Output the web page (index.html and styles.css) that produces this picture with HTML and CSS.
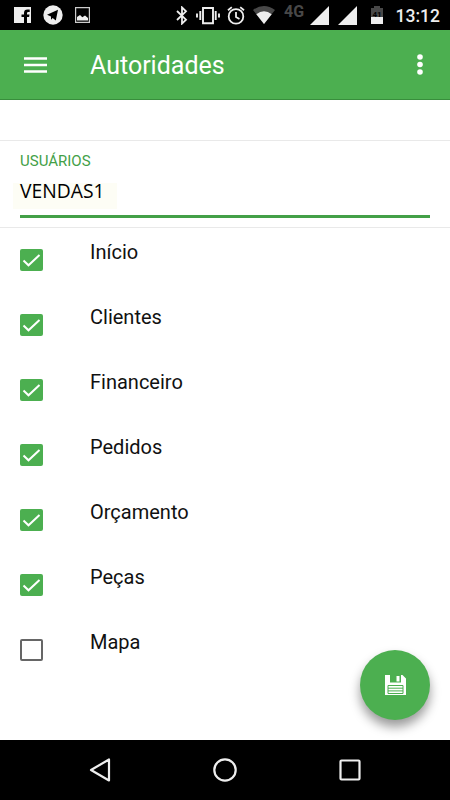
FILE: index.html
```html
<!DOCTYPE html>
<html lang="pt-BR">
<head>
<meta charset="utf-8">
<title>Autoridades</title>
<link rel="stylesheet" href="styles.css">
</head>
<body>
<div class="screen">
  <div class="status">
    <svg class="fb" width="17" height="16" viewBox="0 0 17 16"><path fill="#eee" d="M0 0h17v16h-4V10h2.100l.4-2.500H13V6.200q0-1.200 1.200-1.200h1.500V2.500h-2.200q-3.500 0-3.500 3.400v1.600H7.500V10H10v6H0z"/></svg>
    <svg class="tg" width="20" height="20" viewBox="0 0 20 20"><circle cx="10" cy="10" r="9.700" fill="#eee"/><path d="M4 9.700 15 4.700 12.800 15.500 9.700 12.900 8 14.800V11.400z"/></svg>
    <svg class="pic" width="15" height="16" viewBox="0 0 15 16"><path d="M.6.600h13.800v14.800H.6z" fill="none" stroke="#ccc" stroke-width="1.200"/><path d="M2 13.500V10l3-2 2.300 2.300L10 8.500l3 2.500v2.500z" fill="#eee"/></svg>
    <svg class="bt" width="12" height="19" viewBox="0 0 12 19"><path d="m1 5 9 8.700L6 17.600V1.400L10 5.300 1 14" fill="none" stroke="#eee" stroke-width="1.800"/></svg>
    <svg class="vib" width="24" height="19" viewBox="0 0 24 19"><path d="M7 2h10v15.300H7zM4.300 5v9M19.700 5v9M1 7.500v4M23 7.500v4" fill="none" stroke="#eee" stroke-width="1.900"/></svg>
    <svg class="alarm" width="18" height="19" viewBox="0 0 18 19"><path d="M1 4.300 4.800 1.100M17 4.300l-3.800-3.200M9 6v5l3.500 2" fill="none" stroke="#eee" stroke-width="1.800"/><circle cx="9" cy="10.400" r="7.300" fill="none" stroke="#eee" stroke-width="1.800"/></svg>
    <svg class="wifi" width="22" height="18" viewBox="0 0 22 18"><path fill="#484848" d="M0 4Q11-4 22 4L11 18z"/><path fill="#eee" d="M3.300 8.200Q11 2.500 18.700 8.200L11 18z"/></svg>
    <span class="net">4G</span>
    <svg class="sig" width="19" height="19" viewBox="0 0 19 19"><path fill="#eee" d="M19 0v19H0z"/></svg>
    <svg class="sig2" width="19" height="19" viewBox="0 0 19 19"><path fill="#eee" d="M19 0v19H0z"/></svg>
    <span class="battery">41</span>
    <span class="clock">13:12</span>
  </div>
  <header class="bar">
    <svg class="menu" width="23" height="16" viewBox="0 0 23 16"><path d="M0 1.500h23M0 8h23M0 14.500h23" stroke="#fff" stroke-width="2.500"/></svg>
    <h1 class="title">Autoridades</h1>
    <svg class="more" width="6" height="21" viewBox="0 0 6 21" fill="#fff"><circle cx="3" cy="3" r="2.800"/><circle cx="3" cy="10.500" r="2.800"/><circle cx="3" cy="18" r="2.800"/></svg>
  </header>
  <section class="field">
    <label class="label" for="user">USUÁRIOS</label>
    <div class="value" id="user">VENDAS1</div>
  </section>
  <main class="list">
    <div class="row"><span class="box on"><svg width="23" height="22" viewBox="0 0 23 22"><path d="m3.500 11.500 5 4.800L19.500 6"/></svg></span><span class="name">Início</span></div>
    <div class="row"><span class="box on"><svg width="23" height="22" viewBox="0 0 23 22"><path d="m3.500 11.500 5 4.800L19.500 6"/></svg></span><span class="name">Clientes</span></div>
    <div class="row"><span class="box on"><svg width="23" height="22" viewBox="0 0 23 22"><path d="m3.500 11.500 5 4.800L19.500 6"/></svg></span><span class="name">Financeiro</span></div>
    <div class="row"><span class="box on"><svg width="23" height="22" viewBox="0 0 23 22"><path d="m3.500 11.500 5 4.800L19.500 6"/></svg></span><span class="name">Pedidos</span></div>
    <div class="row"><span class="box on"><svg width="23" height="22" viewBox="0 0 23 22"><path d="m3.500 11.500 5 4.800L19.500 6"/></svg></span><span class="name">Orçamento</span></div>
    <div class="row"><span class="box on"><svg width="23" height="22" viewBox="0 0 23 22"><path d="m3.500 11.500 5 4.800L19.500 6"/></svg></span><span class="name">Peças</span></div>
    <div class="row"><span class="box"></span><span class="name">Mapa</span></div>
  </main>
  <div class="fab">
    <svg width="21" height="20" viewBox="0 0 21 20"><path fill="#fff" d="M0 0h5v7.500h11V0h1.500L21 3.500V20H0z"/><path fill="#fff" d="M11.500 1h3v5.500h-3z"/><path d="M3 10.500h15v8H3zM3 13.200h15M3 15.900h15" fill="none" stroke="#4caf50" stroke-width="1"/></svg>
  </div>
  <nav class="nav">
    <svg width="24" height="24" viewBox="0 0 24 24"><path d="M21 1.500v21L3 12z"/></svg>
    <svg width="24" height="24" viewBox="0 0 24 24"><circle cx="12" cy="12" r="10.700"/></svg>
    <svg width="24" height="24" viewBox="0 0 24 24"><rect x="2.500" y="2.500" width="19" height="19" rx="1"/></svg>
  </nav>
</div>
</body>
</html>
```

FILE: styles.css
```css
* { box-sizing: border-box; }
body { margin: 0; font-family: Roboto, sans-serif; background: #fff; }
.screen { position: relative; width: 450px; height: 800px; display: flex; flex-direction: column; overflow: hidden; }
svg { display: block; flex: none; }
.status { height: 30px; flex: none; background: #000; display: flex; align-items: center; padding-left: 14px; white-space: nowrap; }
.tg { margin-left: 11.500px; }
.pic { margin-left: 12.500px; }
.bt { margin-left: 86px; }
.vib { margin-left: 7.500px; }
.alarm { margin-left: 7px; }
.wifi { margin-left: 8.500px; }
.net { width: 22px; margin: -6px 0 0 9px; color: #484848; font-size: 16px; line-height: 16px; font-weight: 700; }
.sig { margin-left: 4px; }
.sig2 { margin-left: 9px; }
.battery { width: 12px; height: 18px; margin-left: 14px; color: #000; background: linear-gradient(#484848 62%, #eee 62%); clip-path: polygon(0 11%, 25% 11%, 25% 0, 75% 0, 75% 11%, 100% 11%, 100% 100%, 0 100%); font-size: 8px; font-weight: 700; line-height: 18px; text-align: center; }
.clock { margin: 1px 0 0 12.500px; color: #eee; font-size: 17.500px; font-weight: 500; line-height: 20px; }
.bar { height: 70px; flex: none; display: flex; align-items: center; padding: 0 27px 0 24px; background: #4caf50; border-bottom: 1px solid #388e3c; }
.title { margin: 2px auto 0 43px; color: #fff; font-size: 25px; font-weight: 400; line-height: 30px; }
.field { height: 88px; flex: none; margin-top: 40px; padding: 11px 20px 0; border: solid #e9e9e9; border-width: 1px 0; }
.label { display: block; color: #43a047; font-size: 15px; line-height: 18px; }
.value { width: 417px; height: 48px; margin-left: -7px; padding: 7px 0 0 7px; color: #000; font-family: "Open Sans", sans-serif; font-size: 19.300px; line-height: 27px; background: linear-gradient(#43a047, #43a047) 7px 45px / 410px 3px no-repeat, linear-gradient(#fdfdf5, #fdfdf5) 0 13px / 104px 26px no-repeat; }
.list { flex: 1; padding-left: 20px; }
.row { height: 65px; display: flex; align-items: flex-start; }
.box { width: 23px; height: 22px; flex: none; margin: 21px 47px 0 0; border: 2px solid #666; border-radius: 2px; }
.box.on { border: 0; background: #4caf50; }
.box path { fill: none; stroke: #fff; stroke-width: 2; }
.name { margin-top: 12px; color: #111; font-size: 20px; line-height: 24px; }
.fab { position: absolute; left: 360px; top: 650px; width: 70px; height: 70px; border-radius: 50%; display: flex; align-items: center; justify-content: center; background: #4caf50; box-shadow: 0 7px 11px rgba(0, 0, 0, .4); }
.nav { height: 60px; flex: none; display: flex; align-items: center; justify-content: space-between; padding: 0 88px; background: #000; }
.nav svg { fill: none; stroke: #eee; stroke-width: 2.200; stroke-linejoin: round; }
```
